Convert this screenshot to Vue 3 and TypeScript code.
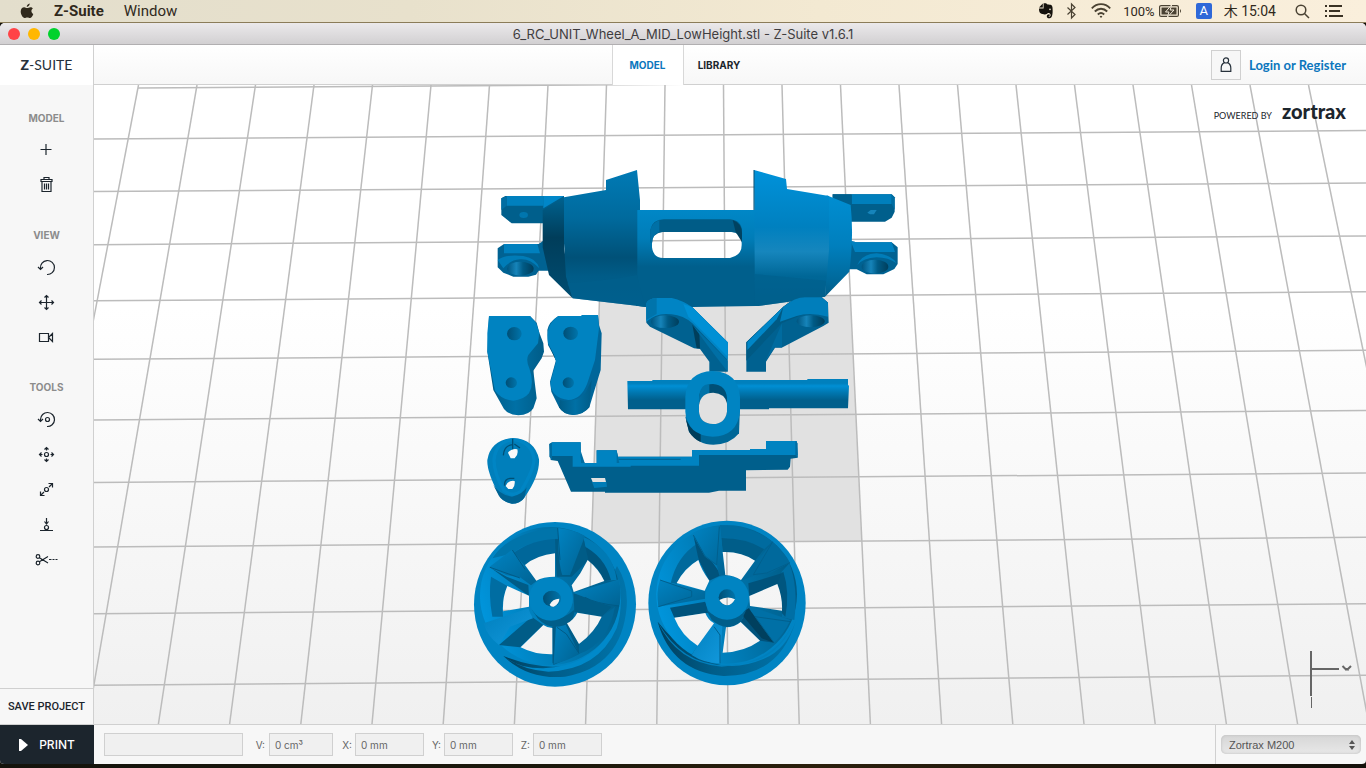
<script setup lang="ts">
import { ref } from 'vue'

interface Tool {
  label: string
  paths: string[]
  rings?: number[][]
}
interface Section {
  title: string
  tools: Tool[]
}

const sections: Section[] = [
  {
    title: 'MODEL',
    tools: [
      { label: 'Add model', paths: ['M5.5 10.5H16.5M11 5V16'] },
      {
        label: 'Delete model',
        paths: ['M6 5.5H17V7.5H6ZM9 5.5V3.5H14V5.5M7 7.5V17.5H16V7.5M9.5 9.5V15.5M11.5 9.5V15.5M13.5 9.5V15.5'],
      },
    ],
  },
  {
    title: 'VIEW',
    tools: [
      { label: 'Rotate view', paths: ['M5.5 12.5A7 7 0 1 1 12 18.5M3 11L5.5 13.5L8 11'] },
      {
        label: 'Pan view',
        paths: ['M11.5 4.5V18.5M4.5 11.5H18.5M9.5 6.5L11.5 4.5L13.5 6.5M9.5 16.5L11.5 18.5L13.5 16.5M6.5 9.5L4.5 11.5L6.5 13.5M16.5 9.5L18.5 11.5L16.5 13.5'],
      },
      { label: 'Camera', paths: ['M4.5 7.5H13.5V15.5H4.5ZM13.5 11.5L17.5 7.5V15.5Z'] },
    ],
  },
  {
    title: 'TOOLS',
    tools: [
      { label: 'Rotate', paths: ['M5.5 13V11.5A7 7 0 1 1 12 18.5M3 11L5.5 13.5L8 11'], rings: [[12.5, 11.5, 2]] },
      {
        label: 'Move',
        paths: ['M11.5 4.5V7.5M11.5 15.5V18.5M4.5 11.5H7.5M15.5 11.5H18.5M9.5 6.5L11.5 4.5L13.5 6.5M9.5 16.5L11.5 18.5L13.5 16.5M6.5 9.5L4.5 11.5L6.5 13.5M16.5 9.5L18.5 11.5L16.5 13.5'],
        rings: [[11.5, 11.5, 2]],
      },
      {
        label: 'Scale',
        paths: ['M14 9L17.5 5.5M13.5 5.5H17.5V9.5M9 14L5.5 17.5M5.5 13.5V17.5H9.5'],
        rings: [[11.5, 11.5, 2]],
      },
      { label: 'Place on platform', paths: ['M5 17.5H18M11.5 5V11M9.5 8.5L11.5 11L13.5 8.5'], rings: [[11.5, 14.5, 2]] },
      { label: 'Split', paths: ['M4 9.5L13 15M4 14L13 8.5M14 11.5H16.5M17.5 11.5H19.5M20.5 11.5H22.5'], rings: [[3, 8.5, 1.8], [3, 15, 1.8]] },
    ],
  },
]

const columns = Array.from({ length: 22 }, (_, i) => i - 10).map((k) => ({
  top: 723.5 + 58.5 * k,
  bottom: 728 + 71.2 * k,
}))
const rows = [84, 135, 187.5, 240.5, 296.5, 355, 415.5, 478, 542.3, 609, 680.5].map((y, i) => {
  const slope = 0.0065 + i * 0.00014
  return { left: y + 606 * slope, right: y - 666 * slope }
})

const fields = ref([
  { id: 'volume', label: 'V:', value: '0 cm³', wide: false },
  { id: 'size-x', label: 'X:', value: '0 mm', wide: true },
  { id: 'size-y', label: 'Y:', value: '0 mm', wide: true },
  { id: 'size-z', label: 'Z:', value: '0 mm', wide: true },
])
const status = ref('')
const printer = ref('Zortrax M200')
</script>

<template>
  <div class="desktop">
    <header class="menubar">
      <svg class="apple" width="14" height="16" viewBox="0 0 14 16"><path d="M9.7 0.5C9.8 2.2 8.4 3.9 6.8 3.9C6.6 2.3 8.1 0.7 9.7 0.5ZM12.9 5.6C10.7 7 11.1 10 13.3 11C12.7 12.8 11.3 15 10 15C8.9 15 8.6 14.4 7.3 14.4C6 14.4 5.6 15 4.6 15C2.8 15 0.7 11.5 0.7 8.6C0.7 5.8 2.4 4.3 4.2 4.3C5.4 4.3 6.3 5.1 7.2 5.1C8.1 5.1 9.1 4.2 10.5 4.2C11.4 4.2 12.3 4.7 12.9 5.6Z" fill="#30291c" /></svg>
      <button class="menu strong">Z-Suite</button>
      <button class="menu">Window</button>
      <div class="tray">
        <svg width="16" height="18" viewBox="0 0 16 18"><path d="M1 5.5L4.8 1.5V5.5ZM5.6 1.2H8L9.6 2.4C13 2.6 14.2 2.7 14.5 5.5C14.8 9 14.8 12.8 13.6 15C12.5 16.8 8.8 16.9 8.8 14.6C8.8 12.8 10 12.2 11.6 12.4V14H10.5C10.7 15 12.5 14.9 12.6 13.2C12.8 11.6 11.4 11 9.8 11C9 12.6 6.8 12.6 5.8 12.2C2 11.6 1 10.5 1 6.4H5.6Z" fill="#15120d" /><circle cx="12" cy="7.4" r=".8" fill="#f5ecdb" /></svg>
        <svg class="bt" width="11" height="18" viewBox="0 0 11 18"><path d="M1.5 5.5L9 12.5L5.5 16V2L9 5.5L1.5 12.5" fill="none" stroke="#4a4233" stroke-width="1.2" /></svg>
        <svg class="wifi" width="20" height="16" viewBox="0 0 20 16" fill="none" stroke="#4a4233" stroke-width="1.8"><path d="M.8 5.4C6-.2 14-.2 19.2 5.4M3.8 8.5C7.4 4.8 12.6 4.8 16.2 8.5M6.8 11.5C8.7 9.7 11.3 9.7 13.2 11.5" /><path d="M8.6 13.4Q10 12.2 11.4 13.4L10 15Z" fill="#4a4233" stroke="none" /></svg>
        <span class="percent">100%</span>
        <svg class="battery" width="23" height="14" viewBox="0 0 23 14"><rect x=".6" y="1.6" width="18.8" height="10.8" rx="1.5" fill="none" stroke="#4a4233" stroke-width="1.2" /><rect x="2.5" y="3.5" width="15" height="7" fill="#4a4233" /><path d="M12.5 1L6.5 8H10L8.5 13L15 6H11.2Z" fill="#4a4233" stroke="#f5ecdb" /><path d="M21 5Q23 7 21 9Z" fill="#4a4233" /></svg>
        <span class="ime">A</span>
        <span class="clock">木 15:04</span>
        <svg class="search" width="15" height="15" viewBox="0 0 15 15" fill="none" stroke="#4a4233" stroke-width="1.5"><circle cx="6" cy="6" r="4.8" /><path d="M9.5 9.5L14 14" /></svg>
        <svg width="19" height="12" viewBox="0 0 19 12" fill="#3a3225"><path d="M4 0H17V2H4ZM4 5H15V7H4ZM4 10H18V12H4ZM0 0H2V2H0ZM0 5H2V7H0ZM0 10H2V12H0Z" /></svg>
      </div>
    </header>

    <main class="window">
      <div class="titlebar">
        <button class="light red" aria-label="Close"></button>
        <button class="light amber" aria-label="Minimise"></button>
        <button class="light green" aria-label="Zoom"></button>
        <h1>6_RC_UNIT_Wheel_A_MID_LowHeight.stl - Z-Suite v1.6.1</h1>
      </div>

      <div class="topbar">
        <div class="brand"><b>Z</b>-SUITE</div>
        <nav class="tabs">
          <button class="tab active">MODEL</button>
          <button class="tab">LIBRARY</button>
        </nav>
        <div class="account">
          <button class="user" aria-label="Account">
            <svg width="14" height="18" viewBox="0 0 14 18" fill="none" stroke="#27313b" stroke-width="1.2"><circle cx="7" cy="4.4" r="2.6" /><path d="M5.4 6.6C3 7.8 2.2 9.4 2.2 12V15.4H11.8V12C11.8 9.4 11 7.8 8.6 6.6" /></svg>
          </button>
          <a href="#">Login or Register</a>
        </div>
      </div>

      <div class="workspace">
        <aside class="sidebar">
          <section v-for="s in sections" :key="s.title">
            <h2>{{ s.title }}</h2>
            <button v-for="t in s.tools" :key="t.label" class="tool" :aria-label="t.label">
              <svg width="23" height="23" viewBox="0 0 23 23">
                <path v-for="p in t.paths" :key="p" :d="p" />
                <circle v-for="(c, i) in t.rings ?? []" :key="i" :cx="c[0]" :cy="c[1]" :r="c[2]" />
              </svg>
            </button>
          </section>
          <button class="save">SAVE PROJECT</button>
        </aside>

        <div class="viewport">
          <svg class="scene" viewBox="94 85 1272 639" preserveAspectRatio="xMidYMid slice">
            <defs>
              <linearGradient id="cone" x1="0" y1="0" x2="0" y2="1"><stop offset="0" stop-color="#007ab5" /><stop offset=".35" stop-color="#006a9d" /><stop offset=".64" stop-color="#005178" /><stop offset=".78" stop-color="#005c88" /><stop offset="1" stop-color="#006190" /></linearGradient>
              <linearGradient id="capL" x1="0" y1="0" x2="0" y2="1"><stop offset="0" stop-color="#00628f" /><stop offset=".4" stop-color="#003d5a" /><stop offset="1" stop-color="#004d72" /></linearGradient>
              <linearGradient id="mid" gradientUnits="userSpaceOnUse" x1="0" y1="150" x2="0" y2="320"><stop offset="0" stop-color="#0087c7" /><stop offset=".5" stop-color="#007db8" /><stop offset="1" stop-color="#005f8c" /></linearGradient>
              <linearGradient id="coneR" x1="0" y1="0" x2="0" y2="1"><stop offset="0" stop-color="#0092da" /><stop offset=".42" stop-color="#0080bf" /><stop offset=".6" stop-color="#1686bd" /><stop offset=".78" stop-color="#006797" /><stop offset="1" stop-color="#005f8c" /></linearGradient>
              <linearGradient id="capR" x1="0" y1="0" x2="0" y2="1"><stop offset="0" stop-color="#008ed2" /><stop offset=".5" stop-color="#007fbd" /><stop offset="1" stop-color="#005e8a" /></linearGradient>
              <linearGradient id="shaft" x1="0" y1="0" x2="0" y2="1"><stop offset="0" stop-color="#0080bd" /><stop offset=".14" stop-color="#0080bd" /><stop offset=".23" stop-color="#008fd4" /><stop offset=".45" stop-color="#0077b0" /><stop offset=".7" stop-color="#005f8c" /><stop offset="1" stop-color="#005f8c" /></linearGradient>
              <linearGradient id="side"><stop offset="0" stop-color="#005b86" /><stop offset=".5" stop-color="#0070a5" /><stop offset="1" stop-color="#005c88" /></linearGradient>
              <linearGradient id="bore"><stop offset="0" stop-color="#005580" /><stop offset=".35" stop-color="#1684ba" /><stop offset=".6" stop-color="#005b86" /><stop offset="1" stop-color="#003e5c" /></linearGradient>
              <linearGradient id="hole"><stop offset="0" stop-color="#004f76" /><stop offset="1" stop-color="#0074ab" /></linearGradient>
              <linearGradient id="well" x1="0" y1=".6" x2="1" y2=".3"><stop offset="0" stop-color="#0095dc" /><stop offset=".45" stop-color="#007ab4" /><stop offset="1" stop-color="#005a84" /></linearGradient>
              <linearGradient id="lip"><stop offset="0" stop-color="#003f5d" /><stop offset=".4" stop-color="#005d89" /><stop offset="1" stop-color="#0074ab" /></linearGradient>
              <linearGradient id="spoke" x1="0" y1="0" x2="1" y2="1"><stop offset="0" stop-color="#0083c2" /><stop offset="1" stop-color="#006393" /></linearGradient>
              <linearGradient id="glow" x1="0" y1="0" x2="1" y2="1"><stop offset="0" stop-color="#007fbd" /><stop offset="1" stop-color="#1298dc" /></linearGradient>
              <mask id="cutA" maskUnits="userSpaceOnUse" x="0" y="0" width="540" height="555">
                <rect width="540" height="555" fill="#fff" />
                <path d="M180 165Q215 136 270 130V200Q234 200 214 212ZM368 150Q402 178 418 213L326 246L320 226L346 190ZM127 228L192 257V290L114 304Q112 262 127 228ZM337 308L410 320Q390 366 342 402L306 340Q326 330 337 308ZM167 412L235 345Q248 354 262 354V433Q208 434 167 412ZM254 284Q262 266 283 266Q283 282 266 290Q257 291 254 284Z" />
              </mask>
              <mask id="cutB" maskUnits="userSpaceOnUse" x="0" y="0" width="540" height="555">
                <rect width="540" height="555" fill="#fff" />
                <path d="M248 126Q304 124 345 152L303 210Q282 196 256 195ZM110 219Q134 174 175 150Q184 180 208 212L194 242ZM328 258L412 222Q428 262 426 302L330 288ZM103 323L196 309Q204 330 222 340L173 407Q124 376 103 323ZM258 352Q284 352 302 336L360 392Q312 426 248 428ZM238 270Q262 256 285 268Q275 286 261 286Q246 284 238 270Z" />
              </mask>
            </defs>

            <polygon points="599.6,297.1 850.2,295.5 861.6,541.2 591.5,543" fill="#e1e1e1" />
            <g stroke="#bcbcbc" stroke-width="1.5">
              <line v-for="c in columns" :key="c.top" :x1="c.top" y1="85" :x2="c.bottom" y2="724" />
              <line v-for="(r, i) in rows" :key="r.left" :x1="i === 0 ? 138 : 94" :y1="r.left" x2="1366" :y2="r.right" />
            </g>

            <!-- chassis -->
            <g transform="translate(480 160) scale(.33333)">
              <path d="M64 115L76 108H252V145L190 150V190H95L64 165Z" fill="#005f8c" />
              <path d="M80 108H190V137H80Z" fill="#0080be" /><path d="M190 108H252L190 145Z" fill="#0087c9" /><path d="M64 115L80 108V137L64 150Z" fill="#006da2" />
              <ellipse cx="131" cy="165" rx="13" ry="9" fill="#0076ae" />
              <path d="M53 265L72 252H176L190 242L208 332H176L168 344L145 350H100L70 338L53 322Z" fill="#006292" />
              <path d="M72 252H172L180 280H72Z" fill="#0080be" /><path d="M53 300Q75 282 130 288Q170 295 178 325Q150 295 120 298Q90 300 70 325Z" fill="#007cb7" />
              <ellipse cx="121" cy="326" rx="40" ry="21" fill="url(#bore)" />
              <path d="M188 150L252 112V265L278 415L207 345L188 262Z" fill="url(#capL)" />
              <path fill-rule="evenodd" d="M468 150H828V438L640 441H495L468 437ZM548 213Q516 219 516 240V262Q520 294 550 294H750Q785 286 785 255V238Q780 216 758 216Z" fill="url(#mid)" />
              <path d="M252 112L378 90V60L471 30L480 120V150H472V345L480 390L495 440L278 415L258 350L252 250Z" fill="url(#cone)" />
              <path d="M511 246V210Q517 178 552 178H750Q786 182 786 215V248Q781 216 754 216H548Q516 220 516 250Z" fill="#005c87" />
              <path d="M511 246V210Q517 188 538 180V216Q516 224 516 250Z" fill="#0070a6" /><path d="M758 180Q786 190 786 220V246L767 216Z" fill="#004260" />
              <path d="M1058 103H1235L1244 112V155L1235 173L1215 185H1100V135L1058 118Z" fill="#005f8c" />
              <path d="M1115 103H1235V132H1115Z" fill="#007fbc" /><path d="M1058 103H1115V135L1058 116Z" fill="#00608e" /><path d="M1235 103L1244 112V150L1235 132Z" fill="#006da2" />
              <path d="M1162 158L1172 150H1190L1182 163H1170Z" fill="#1684ba" />
              <path d="M1100 240L1130 247H1235L1253 262V312L1243 327L1210 343H1160L1130 328H1098Z" fill="#006292" />
              <path d="M1112 243L1130 247H1235L1245 276H1125Z" fill="#0081c0" /><path d="M1132 315Q1145 282 1190 280Q1235 284 1250 310Q1225 292 1190 292Q1150 294 1132 315Z" fill="#007db9" />
              <ellipse cx="1185" cy="320" rx="40" ry="21" fill="url(#bore)" />
              <path d="M1040 106L1112 135Q1122 230 1108 335L1035 410L1040 270Z" fill="url(#capR)" />
              <path d="M822 30L918 57L921 87L1047 108V270L1035 410L835 438H825Z" fill="url(#coneR)" />
              <path d="M472 345V350L495 440L278 415L262 370Q380 362 472 345ZM825 342L1038 362L1035 410L835 438H825Z" fill="#005f8c" opacity=".6" />
              <path d="M822 30V150" stroke="#004b70" stroke-width="3" />
            </g>

            <!-- suspension arms, shaft and ring -->
            <g transform="translate(620 290) scale(.33333)">
              <path d="M79 40Q84 26 110 24H155Q190 32 217 52L323 157V245H268V215L240 177L222 175L90 110L79 98Z" fill="#006190" />
              <path d="M79 40Q84 26 110 24H155Q190 32 217 52L323 157V210L217 100Q190 76 155 73Q110 66 79 95Z" fill="#0084c4" />
              <path d="M190 42L217 52L323 157V200L205 80Z" fill="#0090d5" /><path d="M79 40Q84 26 110 24V72L79 90Z" fill="#0074ab" />
              <path d="M217 104L238 125L240 175H230Z" fill="#003e5b" /><path d="M217 104L323 212V245L280 190Z" fill="#006fa5" />
              <ellipse cx="135" cy="95" rx="42" ry="19" fill="url(#bore)" />
              <path d="M379 157L490 50Q525 22 555 22H605L624 38L626 98L610 108L485 173H465L438 215V245H379Z" fill="#006190" />
              <path d="M490 50Q525 22 555 22H605L624 38V80Q585 65 545 75L485 100L379 212V157Z" fill="#005a84" />
              <path d="M490 50Q525 22 555 22H605L624 38V80Q570 65 530 78L480 95Z" fill="#007ebb" /><path d="M382 156L490 50L470 88L382 180Z" fill="#0086c7" />
              <path d="M438 210L486 100V172H465Z" fill="#006b9f" />
              <ellipse cx="572" cy="94" rx="42" ry="18" fill="url(#bore)" />
              <path d="M22 273H97V270H562V267H684V285L687 287L684 355H447V358H24Z" fill="url(#shaft)" />
              <path d="M196 380L207 425Q235 464 280 464Q330 464 357 430L360 350Z" fill="#006797" />
              <path d="M198 390L207 425Q222 448 242 456V425Z" fill="#003d5a" />
              <path d="M196 320Q200 246 278 243Q355 246 360 320V365Q352 438 278 440Q201 435 196 365Z" fill="#0084c2" />
              <path d="M237 324Q240 282 279 282Q318 285 321 324V365Q315 402 279 402Q240 400 237 365Z" fill="#004f75" />
              <path d="M237 324Q240 282 268 283V312L237 340Z" fill="#0072a8" />
              <path d="M237 345Q243 308 280 308Q315 310 321 340V365Q315 402 279 402Q240 400 237 365Z" fill="#e1e1e1" />
            </g>

            <!-- knuckles, cam and rail -->
            <g transform="translate(480 300) scale(.33333)">
              <path d="M27 48H150L170 68L178 98L190 130L192 155L185 175L160 212L170 295L160 325Q148 345 115 346Q85 344 72 327L40 270L22 155Z" fill="url(#side)" />
              <path d="M27 48H150L168 68L178 98L174 130L145 165Q137 180 148 205Q164 250 147 280Q130 300 100 302Q65 300 45 272L22 155V100Z" fill="#0083c1" />
              <ellipse cx="103" cy="101" rx="22" ry="20" fill="url(#hole)" /><ellipse cx="94" cy="248" rx="17" ry="16" fill="url(#hole)" />
              <path d="M235 48H305V45H354L357 75L365 100L362 210L328 322Q310 344 280 345Q250 344 237 322L214 275L210 245L228 180L204 135L202 90Q206 66 235 48Z" fill="#00669a" />
              <path d="M240 300Q285 310 315 280L335 240L328 322Q310 344 280 345Q250 344 237 322Z" fill="url(#side)" />
              <path d="M204 128L228 152L232 182L226 178Z" fill="#00425f" />
              <path d="M235 48H305V45H354L357 85L345 180L322 250Q303 300 265 300Q215 295 211 250L228 185L222 165L204 130Q195 75 235 48Z" fill="#0083c1" />
              <ellipse cx="272" cy="100" rx="22" ry="20" fill="url(#hole)" /><ellipse cx="265" cy="248" rx="17" ry="16" fill="url(#hole)" />

              <path fill-rule="evenodd" d="M99 414Q165 418 177 478Q180 525 135 590Q122 611 96 611Q68 606 57 585Q20 515 22 480Q32 420 99 414ZM84 458Q96 444 112 448Q116 464 104 475H92ZM77 558Q84 540 104 543Q106 558 97 567H85Z" fill="#007fbb" />
              <path d="M99 419Q155 424 162 478Q162 510 122 575Q98 592 72 572Q42 520 42 480Q47 425 99 419Z" fill="none" stroke="#0089ca" stroke-width="10" opacity=".6" />
              <path d="M40 555Q60 585 96 590Q128 583 140 562L133 593Q120 611 96 611Q68 606 57 588Z" fill="#006292" />
              <path d="M70 466Q72 436 98 434M98 416V448M103 432L120 444M74 557Q72 537 90 535H103" fill="none" stroke="#004f75" stroke-width="4" />

              <path d="M208 432L218 427H302L303 470L314 489H350V451H410L413 470H636V450H810V447H858V423H950L953 473L932 476L930 500L923 509L798 511V572H717L687 578H375V575H273L233 483L212 480Z" fill="#005f8c" />
              <path d="M216 427H302V470L304 489H350V451H410L413 470H636V450H810V447H858V423H950L953 465H657V497H452V500H278L278 468H216Z" fill="#0083c1" />
              <path d="M208 432L216 427V480L208 470ZM303 455L314 489H303ZM410 451L418 489H410ZM946 423L953 430V473L946 465Z" fill="#006da2" />
              <path d="M416 478H602" stroke="#006292" stroke-width="3" />
              <path d="M333 534H375L378 546H338Z" fill="#e1e1e1" /><path d="M336 546H379L381 560L343 564Z" fill="#007cb7" />
            </g>

            <!-- left wheel -->
            <g transform="translate(465 510) scale(.33333)" mask="url(#cutA)">
              <ellipse cx="270" cy="283" rx="243" ry="247" fill="#0084c3" />
              <path d="M115 438Q190 510 300 500Q470 470 485 290Q490 220 456 168L440 200Q470 350 400 420Q300 510 115 438Z" fill="url(#lip)" />
              <path d="M115 438Q160 476 235 475Q370 470 432 370Q468 300 462 210Q476 290 455 355Q400 480 250 485Q170 480 115 438Z" fill="#0089ca" />
              <ellipse cx="255" cy="258" rx="210" ry="207" fill="url(#well)" />
              <path d="M82 145Q130 68 278 52V90Q190 90 144 130Z" fill="#0074aa" /><path d="M144 130Q200 88 278 86V132Q215 136 180 168Z" fill="#00679a" />
              <path d="M355 80Q445 120 455 210L418 213Q400 170 368 150Z" fill="#007ab4" /><path d="M350 105Q420 138 438 211L418 213Q400 170 366 150Z" fill="#00557e" />
              <path d="M78 200L127 228Q108 270 114 320H82Q70 255 78 200Z" fill="#006da2" />
              <path d="M410 320L450 290Q430 400 342 432V400Q390 365 410 320Z" fill="#00689a" />
              <path d="M190 225L125 200L75 172L192 258ZM270 88L275 200H320L370 150L355 82ZM326 250L440 290L410 320L328 306ZM200 320L235 345L165 412L102 405ZM262 350L300 330L342 402V432L265 465Z" fill="#005c87" />
              <path d="M72 172L140 120L216 212L198 226L165 202L125 196Z" fill="url(#spoke)" />
              <path d="M278 54Q325 58 360 78L315 195H292Q280 165 278 54Z" fill="url(#spoke)" />
              <path d="M325 248L462 208Q470 250 463 285L448 288Q390 280 360 262Z" fill="url(#spoke)" />
              <path d="M56 340L190 295Q194 310 204 325L135 350L102 405Q67 380 56 340Z" fill="url(#glow)" />
              <path d="M274 330H296L342 432Q310 452 266 462Z" fill="url(#spoke)" />
              <path d="M142 120L180 178M278 54L285 150M75 172L165 204M360 262Q390 280 463 288M276 352L304 372L342 430M264 350V460" fill="none" stroke="#005a86" stroke-width="3" />
              <path d="M200 298Q258 360 330 298L322 335Q258 370 218 325Z" fill="#005e8a" />
              <circle cx="258" cy="266" r="66" fill="#0084c2" /><ellipse cx="261" cy="266" rx="27" ry="24" fill="url(#hole)" />
            </g>

            <!-- right wheel -->
            <g transform="translate(640 510) scale(.33333)" mask="url(#cutB)">
              <ellipse cx="261" cy="279" rx="236" ry="247" fill="#0084c3" />
              <path d="M53 335Q95 485 250 498Q420 500 468 330Q440 420 370 447Q200 520 53 335Z" fill="url(#lip)" />
              <path d="M53 335Q110 458 245 470Q400 460 455 348Q425 420 355 450Q150 510 53 335Z" fill="#007fbc" />
              <ellipse cx="260" cy="253" rx="211" ry="208" fill="url(#well)" />
              <path d="M240 45Q340 48 398 95L372 118Q310 80 244 84Z" fill="#006b9f" /><path d="M244 84Q320 84 372 118L345 152Q300 124 248 126Z" fill="#005d89" />
              <path d="M92 220Q110 140 170 102L176 150Q130 174 110 222Z" fill="#00699c" />
              <path d="M425 185L448 160Q475 230 463 330L426 322Z" fill="#006fa5" /><path d="M412 200L430 185Q450 245 436 320L426 310Q428 260 412 222Z" fill="#00567f" />
              <path d="M90 293L196 275L205 308L103 323ZM160 75L176 150L208 212L244 195ZM325 220L425 190L412 222L328 258ZM302 335L330 288L402 398L360 392ZM232 330L173 407L155 435H240Z" fill="#00537c" />
              <path d="M155 70Q195 48 240 50L256 195L238 197L230 165L195 140Z" fill="url(#spoke)" />
              <path d="M398 95Q435 128 450 158L395 187L340 198L303 212Z" fill="#00699c" />
              <path d="M60 210L196 244V266L55 290Q48 245 60 210Z" fill="url(#spoke)" />
              <path d="M222 325L248 332L240 460Q192 460 155 435Z" fill="url(#glow)" />
              <path d="M326 288L452 330Q430 375 402 398L345 340Z" fill="#0070a6" />
              <path d="M302 310L326 295L402 398L365 385Z" fill="#00405e" />
              <path d="M450 158L380 189L340 194L398 95M60 210L155 243V260L55 290M238 50L230 165M160 75L195 138L230 165M222 350L240 375V460M345 320L452 335M345 320L402 398" fill="none" stroke="#00608f" stroke-width="3" />
              <path d="M198 298Q258 355 320 298L302 336Q258 368 215 330Z" fill="#005e8a" />
              <circle cx="261" cy="263" r="66" fill="#0084c2" /><ellipse cx="261" cy="262" rx="25" ry="24" fill="url(#hole)" />
            </g>

            <g fill="none" stroke="#666"><path d="M1311 651V696" stroke-width="2" /><path d="M1311 669H1339" stroke-width="2" /><path d="M1311.5 697V708" /><path d="M1342.5 666L1345.5 669H1348L1351 666M1345 669.5H1349" stroke-width="2" /></g>
          </svg>
          <p class="powered">POWERED BY <strong>zortrax</strong></p>
        </div>
      </div>

      <footer class="bottombar">
        <button class="print"><svg width="9" height="12" viewBox="0 0 9 12"><path d="M0 0H2L9 6L2 12H0Z" fill="#fff" /></svg>PRINT</button>
        <div class="fields">
          <input v-model="status" class="status" aria-label="Status" readonly />
          <template v-for="f in fields" :key="f.id">
            <label :for="f.id">{{ f.label }}</label>
            <input :id="f.id" v-model="f.value" :class="['value', { wide: f.wide }]" />
          </template>
        </div>
        <div class="printer">
          <select v-model="printer" aria-label="Printer"><option>Zortrax M200</option></select>
          <svg class="arrows" width="6" height="10" viewBox="0 0 6 10"><path d="M0 4L3 0L6 4ZM0 6H6L3 10Z" fill="#555" /></svg>
        </div>
      </footer>
    </main>
  </div>
</template>

<style>
body {
  margin: 0;
}
</style>

<style scoped>
* {
  box-sizing: border-box;
}
.desktop {
  display: flex;
  flex-direction: column;
  height: 100vh;
  padding-bottom: 4px;
  background: linear-gradient(90deg, #14130c, #1b180c 40%, #2b1f0c 60%, #14100a);
  font-family: Inter, "Noto Sans CJK JP", sans-serif;
  color: #27313b;
  overflow: hidden;
}
button {
  padding: 0;
  border: 0;
  background: none;
  font: inherit;
  color: inherit;
}
svg {
  display: block;
  flex: none;
}
.menubar {
  display: flex;
  align-items: center;
  height: 23px;
  flex: none;
  padding: 0 22px 0 20px;
  border-bottom: 1px solid #8b7c59;
  background: linear-gradient(90deg, #e3decc, #e8e1cc 30%, #f3e9d2 60%, #faefdc);
  color: #30291c;
  font-family: Roboto, "Noto Sans CJK JP", sans-serif;
  font-size: 14px;
}
.menu {
  margin-left: 20px;
  font-size: 15px;
}
.menu.strong {
  font-weight: 700;
}
.tray {
  display: flex;
  align-items: center;
  margin-left: auto;
}
.bt {
  margin-left: 12px;
}
.wifi {
  margin-left: 14px;
}
.percent {
  margin-left: 12px;
  font-size: 13px;
}
.battery {
  margin-left: 4px;
}
.ime {
  width: 16px;
  height: 16px;
  margin-left: 14px;
  border-radius: 2px;
  background: #2f68d8;
  color: #fff;
  font-size: 13px;
  line-height: 16px;
  text-align: center;
}
.clock {
  margin: 0 19px 0 12px;
  line-height: 20px;
}
.search {
  margin-right: 15px;
}
.window {
  display: flex;
  flex: 1;
  flex-direction: column;
  min-height: 0;
  overflow: hidden;
  border-radius: 5px 5px 4px 4px;
  background: #f7f7f7;
}
.titlebar {
  display: flex;
  align-items: center;
  gap: 8px;
  height: 22px;
  flex: none;
  padding: 0 8px;
  border-bottom: 1px solid #b1afb1;
  background: linear-gradient(#ebe9eb, #d2d0d2);
}
.light {
  width: 12px;
  height: 12px;
  border-radius: 50%;
}
.red {
  background: #ff4347;
}
.amber {
  background: #ffb700;
}
.green {
  background: #00d22c;
}
.titlebar h1 {
  flex: 1;
  margin: 0 60px 0 0;
  color: #3f3d3f;
  font: 400 13px/20px Inter, sans-serif;
  text-align: center;
}
.topbar {
  display: grid;
  grid-template-columns: 1fr auto 1fr;
  height: 40px;
  flex: none;
  border-bottom: 1px solid #d0d0d0;
  background: linear-gradient(#fff, #f7f7f7);
}
.brand {
  width: 94px;
  border-right: 1px solid #d0d0d0;
  background: #fff;
  color: #27313b;
  font: 400 14px/40px Lato, sans-serif;
  text-align: center;
}
.brand b {
  font-weight: 900;
}
.tabs {
  display: flex;
}
.tab {
  width: 71px;
  font-size: 10px;
  font-weight: 700;
  color: #1c252d;
}
.tab.active {
  width: 72px;
  height: 40px;
  border: solid #d8d8d8;
  border-width: 0 1px;
  background: #fff;
  color: #0b76bd;
}
.account {
  display: flex;
  align-items: center;
  justify-content: flex-end;
  gap: 8px;
  padding-right: 20px;
}
.user {
  display: grid;
  width: 30px;
  height: 30px;
  place-items: center;
  border: 1px solid #d0d0d0;
  background: #f7f7f7;
}
.account a {
  color: #0b76bd;
  font: 700 13px/20px Lato, sans-serif;
  text-decoration: none;
}
.workspace {
  display: flex;
  flex: 1;
  min-height: 0;
}
.sidebar {
  display: flex;
  flex-direction: column;
  gap: 23px;
  width: 94px;
  padding-top: 24px;
  border-right: 1px solid #d0d0d0;
  background: #f7f7f7;
}
.sidebar section {
  display: flex;
  flex-direction: column;
  align-items: center;
}
.sidebar h2 {
  margin: 0 0 6px;
  color: #8c8c8c;
  font-size: 10px;
  font-weight: 700;
  line-height: 18px;
}
.tool {
  display: grid;
  width: 35px;
  height: 35px;
  place-items: center;
}
.tool svg {
  fill: none;
  stroke: #1c252d;
  stroke-width: 1.2;
  overflow: visible;
}
.save {
  height: 36px;
  margin-top: auto;
  border-top: 1px solid #d0d0d0;
  color: #1c252d;
  font: 500 11px Roboto, sans-serif;
}
.viewport {
  position: relative;
  flex: 1;
  min-width: 0;
  background: linear-gradient(#fff 35%, #f0f0f0);
}
.scene {
  width: 100%;
  height: 100%;
}
.powered {
  position: absolute;
  top: 14px;
  right: 20px;
  display: flex;
  align-items: baseline;
  gap: 10px;
  margin: 0;
  color: #1c252d;
  font: 400 9px/24px Lato, sans-serif;
}
.powered strong {
  font: 900 20px/24px Lato, sans-serif;
}
.bottombar {
  display: flex;
  height: 40px;
  flex: none;
  border-top: 1px solid #d0d0d0;
}
.print {
  display: flex;
  align-items: center;
  justify-content: center;
  gap: 11px;
  width: 94px;
  background: #1c252d;
  color: #fff;
  font-size: 12px;
  font-weight: 500;
}
.fields {
  display: flex;
  flex: 1;
  align-items: center;
  padding-left: 10px;
  color: #666;
  font-size: 10px;
}
.fields input {
  height: 23px;
  padding: 0 5px;
  border: 1px solid #d0d0d0;
  border-radius: 0;
  background: #f0f0f0;
  color: #666;
  font: 400 10px Inter, sans-serif;
}
.fields .status {
  width: 139px;
}
.fields .value {
  width: 64px;
}
.fields .wide {
  width: 69px;
}
.fields label {
  width: 26px;
  padding-right: 4px;
  text-align: right;
}
.fields .value + label {
  width: 22px;
  padding-right: 3px;
}
.fields .wide + label {
  width: 20px;
}
.printer {
  position: relative;
  width: 151px;
  padding: 10px 5px;
  border-left: 1px solid #d0d0d0;
}
.printer select {
  display: block;
  width: 140px;
  height: 19px;
  padding: 0 8px;
  border: 0;
  border-radius: 5px;
  appearance: none;
  background: linear-gradient(#d6d6d6, #e8e8e8);
  box-shadow: inset 0 0 3px #bbb;
  color: #555;
  font: 400 11px "Liberation Sans", sans-serif;
}
.arrows {
  position: absolute;
  top: 15px;
  right: 11px;
  pointer-events: none;
}
</style>
